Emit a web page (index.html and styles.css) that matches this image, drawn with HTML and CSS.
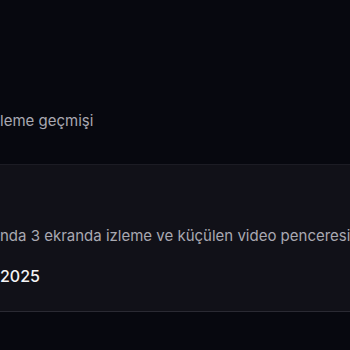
FILE: index.html
```html
<!DOCTYPE html>
<html lang="tr">
<head>
<meta charset="utf-8">
<link rel="stylesheet" href="styles.css">
</head>
<body>
  <main class="page">
    <section class="row row-plain">
      <p class="feature">leme geçmişi</p>
    </section>
    <section class="row row-highlight">
      <p class="feature">nda 3 ekranda izleme ve küçülen video penceresi</p>
      <p class="date">2025</p>
    </section>
  </main>
</body>
</html>
```
FILE: styles.css
```css
html, body {
  margin: 0;
  padding: 0;
  background: #07080f;
  height: 100%;
  overflow: hidden;
}

body {
  font-family: Inter, "Noto Sans", sans-serif;
}

.page {
  display: flex;
  flex-direction: column;
}

.row {
  display: flex;
  flex-direction: column;
  padding-left: 0;
}

.row-plain {
  height: 165px;
  box-sizing: border-box;
  padding-top: 111px;
  border-bottom: 1px solid #1c1c24;
}

.row-highlight {
  background: #111118;
  padding-top: 61px;
  padding-bottom: 23px;
  gap: 18px;
  border-bottom: 1px solid #2a2a33;
}

.feature {
  margin: 0;
  font-size: 15px;
  line-height: 20px;
  color: #a9a9b2;
  white-space: nowrap;
}

.date {
  margin: 0;
  font-size: 16px;
  line-height: 24px;
  font-weight: 500;
  color: #f4f4f6;
}
```
